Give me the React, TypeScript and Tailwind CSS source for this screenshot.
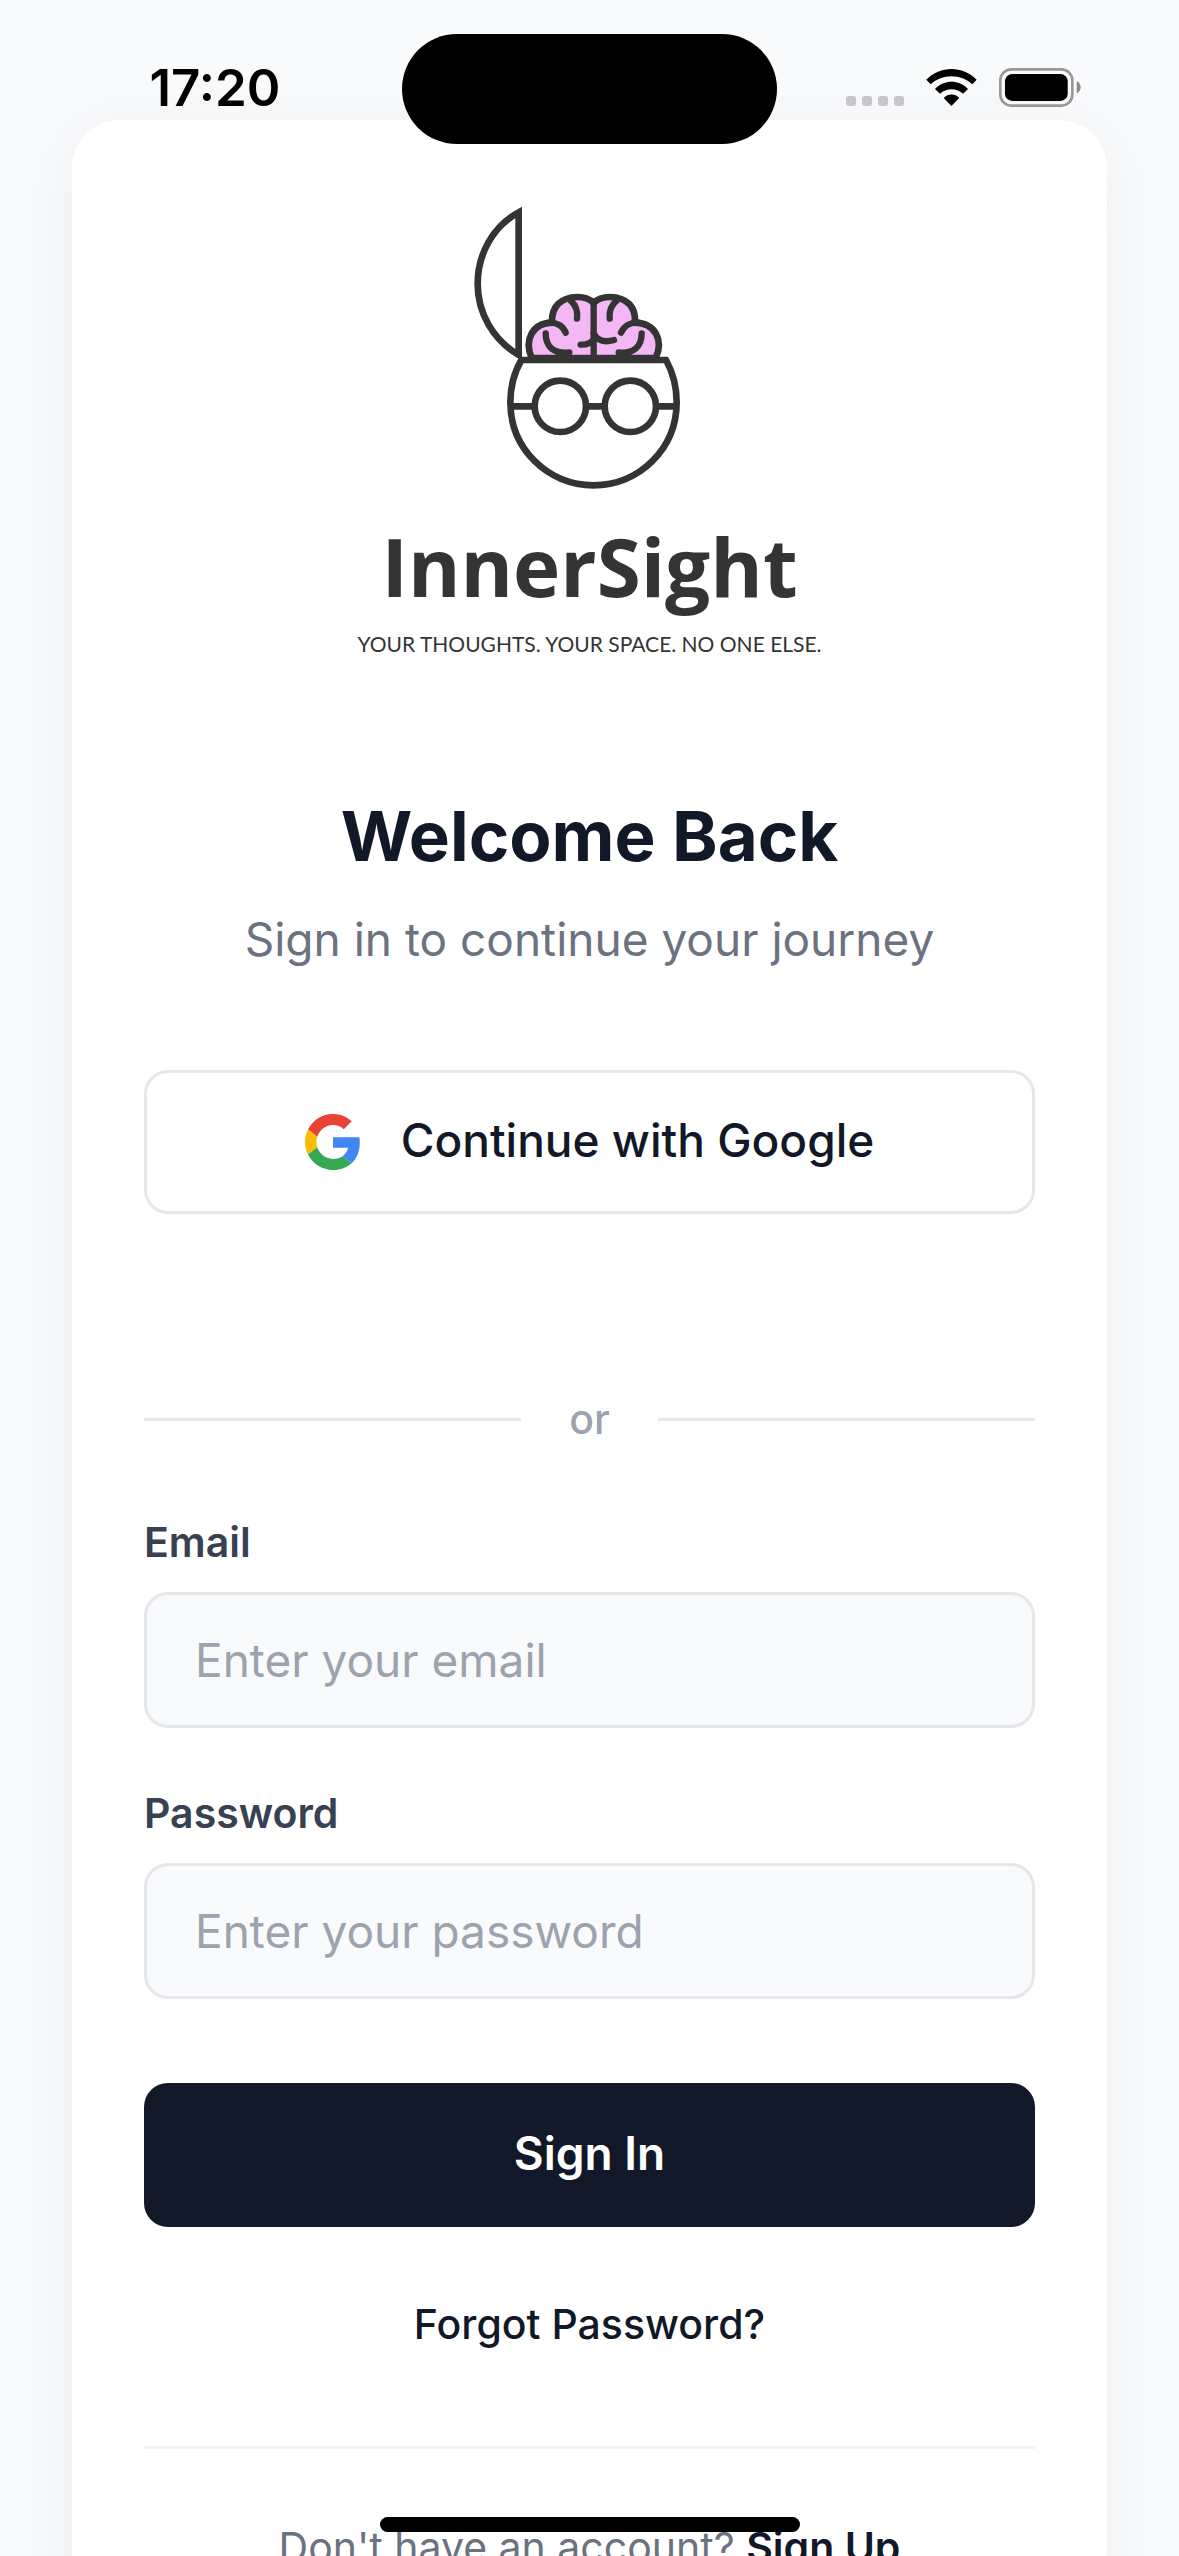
import React, { useState } from "react";

const STROKE = "#343434";

function Logo() {
  return (
    <svg viewBox="30 36 840 900" className="h-[300px] w-[280px]" fill="none" role="img" aria-label="InnerSight logo">
      {/* open skull cap */}
      <path d="M236 97 V525 C160 480 113 400 113 312 C113 220 160 138 236 97 Z" stroke={STROKE} strokeWidth="20" />
      {/* brain lobes */}
      <path
        d="M275 534 C252 480 276 430 336 428 C334 380 362 352 412 351 C434 351 450 357 461 369 C472 357 488 351 510 351 C560 352 588 380 585 428 C646 430 672 480 647 534 Z"
        fill="#f4b6f4"
        stroke={STROKE}
        strokeWidth="20"
        strokeLinejoin="round"
      />
      <g stroke={STROKE} strokeWidth="19" strokeLinecap="round" strokeLinejoin="round">
        <path d="M461 366 V536" />
        <path d="M326 428 C350 426 370 438 377 458" />
        <path d="M595 428 C571 426 552 438 543 458" />
        <path d="M392 362 C408 376 414 394 411 416" />
        <path d="M530 362 C512 376 507 394 509 416" />
        <path d="M317 460 C317 500 340 522 388 517" />
        <path d="M605 460 C605 500 582 522 536 517" />
        <path d="M357 520 V534" />
        <path d="M565 520 V534" />
        <path d="M422 494 C440 495 452 490 461 478" />
        <path d="M461 460 C472 482 494 488 522 480" />
      </g>
      {/* head and glasses */}
      <path
        d="M236 540 H678 C699 578 710 622 710 667 C710 806 598 916 461 916 C323 916 211 806 211 667 C211 622 221 580 244 540"
        stroke={STROKE}
        strokeWidth="20"
      />
      <g stroke={STROKE} strokeWidth="20">
        <circle cx="361" cy="679" r="77" />
        <circle cx="571" cy="679" r="77" />
        <path d="M214 679 H284 M438 679 H494 M648 679 H708" />
      </g>
    </svg>
  );
}

function GoogleIcon() {
  return (
    <svg viewBox="0 0 48 48" className="size-14 shrink-0" aria-hidden="true">
      <path fill="#EA4335" d="M24 9.5c3.54 0 6.71 1.22 9.21 3.6l6.85-6.85C35.9 2.38 30.47 0 24 0 14.62 0 6.51 5.38 2.56 13.22l7.98 6.19C12.43 13.72 17.74 9.5 24 9.5z" />
      <path fill="#4285F4" d="M46.98 24.55c0-1.57-.15-3.09-.38-4.55H24v9.02h12.94c-.58 2.96-2.26 5.48-4.78 7.18l7.73 6c4.51-4.18 7.09-10.36 7.09-17.65z" />
      <path fill="#FBBC05" d="M10.53 28.59c-.48-1.45-.76-2.99-.76-4.59s.27-3.14.76-4.59l-7.98-6.19C.92 16.46 0 20.12 0 24c0 3.88.92 7.54 2.56 10.78l7.97-6.19z" />
      <path fill="#34A853" d="M24 48c6.48 0 11.93-2.13 15.89-5.81l-7.73-6c-2.15 1.45-4.92 2.3-8.16 2.3-6.26 0-11.57-4.22-13.47-9.91l-7.98 6.19C6.51 42.62 14.62 48 24 48z" />
    </svg>
  );
}

function StatusBar() {
  return (
    <header className="pointer-events-none absolute inset-x-0 top-[34px] z-10 grid grid-cols-[1fr_375px_1fr] items-center">
      <time className="justify-self-center pb-1 pl-7 text-[51px] leading-none font-semibold text-black">17:20</time>
      <div className="h-[110px] rounded-full bg-black" />
      <div className="flex items-end gap-[22px] pb-[3px] pl-[69px]">
        <div className="flex gap-[6px] pb-px">
          <span className="size-[10px] rounded-[3px] bg-[#c6c6c8]" />
          <span className="size-[10px] rounded-[3px] bg-[#c6c6c8]" />
          <span className="size-[10px] rounded-[3px] bg-[#c6c6c8]" />
          <span className="size-[10px] rounded-[3px] bg-[#c6c6c8]" />
        </div>
        <svg viewBox="318 54 153 117" className="h-[39px] w-[51px]" aria-hidden="true">
          <path d="M319 89 C360 46 429 46 470 89 L457 103 C423 71 366 71 332 103 Z" />
          <path d="M345 117 C373 88 416 88 444 117 L429 131 C411 113 378 113 360 131 Z" />
          <path d="M371 144 C384 130 405 130 418 144 L394 168 Z" />
        </svg>
        <svg viewBox="537 54 247 117" className="h-[39px] w-[82px]" fill="none" aria-hidden="true">
          <rect x="541" y="58" width="217" height="109" rx="33" stroke="#98989a" strokeWidth="8" />
          <rect x="555" y="72" width="189" height="81" rx="22" fill="black" />
          <path d="M771 94 C787 100 787 124 771 130 Z" fill="#8a8a8c" />
        </svg>
      </div>
    </header>
  );
}

type FieldProps = {
  id: string;
  label: string;
  type: string;
  placeholder: string;
  value: string;
  onChange: (value: string) => void;
};

function Field({ id, label, type, placeholder, value, onChange }: FieldProps) {
  return (
    <div className="flex flex-col gap-[26px]">
      <label htmlFor={id} className="text-[41px] leading-[48px] font-semibold text-[#374151]">
        {label}
      </label>
      <input
        id={id}
        type={type}
        placeholder={placeholder}
        value={value}
        onChange={(e) => onChange(e.target.value)}
        className="h-[136px] w-full rounded-3xl border-3 border-[#e5e7eb] bg-[#f9fafb] px-12 text-[46px] text-[#111827] outline-none placeholder:text-[#9ca3af]"
      />
    </div>
  );
}

export default function App() {
  const [email, setEmail] = useState("");
  const [password, setPassword] = useState("");

  return (
    <div className="relative h-screen overflow-hidden bg-[#f9fafb] px-[72px] pt-[120px] font-['Inter',sans-serif]">
      <StatusBar />
      <main className="flex flex-col rounded-[48px] bg-white p-[72px] shadow-[0_12px_72px_rgba(0,0,0,0.05)]">
        <div className="flex flex-col items-center text-[#343434]">
          <Logo />
          <p className="mt-[26px] font-['Open_Sans',sans-serif] text-[80px] leading-[96px] font-bold">InnerSight</p>
          <p className="mt-[14px] font-['Lato',sans-serif] text-[21px] leading-8">YOUR THOUGHTS. YOUR SPACE. NO ONE ELSE.</p>
        </div>

        <div className="mt-[134px] text-center">
          <h1 className="text-[69px] leading-[84px] font-bold text-[#111827]">Welcome Back</h1>
          <p className="mt-[31px] text-[46px] leading-[60px] text-[#6b7280]">Sign in to continue your journey</p>
        </div>

        <button
          type="button"
          className="mt-[101px] flex h-36 items-center justify-center gap-10 rounded-3xl border-3 border-[#e5e7eb] bg-white text-[46px] font-medium text-[#111827]"
        >
          <GoogleIcon />
          <span className="pb-1">Continue with Google</span>
        </button>

        <div className="mt-[181px] flex items-center gap-12">
          <div className="h-[3px] flex-1 bg-[#e5e7eb]" />
          <span className="text-[41px] leading-[48px] font-medium text-[#9ca3af]">or</span>
          <div className="h-[3px] flex-1 bg-[#e5e7eb]" />
        </div>

        <form className="mt-[75px] flex flex-col" onSubmit={(e) => e.preventDefault()}>
          <div className="flex flex-col gap-[61px]">
            <Field id="email" label="Email" type="email" placeholder="Enter your email" value={email} onChange={setEmail} />
            <Field id="password" label="Password" type="password" placeholder="Enter your password" value={password} onChange={setPassword} />
          </div>
          <button type="submit" className="mt-[84px] h-36 rounded-3xl bg-[#111827] pb-1 text-[46px] font-semibold text-white">
            Sign In
          </button>
        </form>

        <a href="#forgot" className="mt-[73px] self-center text-[41px] leading-[48px] font-medium text-[#111827]">
          Forgot Password?
        </a>

        <div className="mt-[98px] border-t-3 border-[#f3f4f6] pt-[74px] text-center text-[41px] leading-[48px] text-[#6b7280]">
          Don't have an account?{" "}
          <a href="#signup" className="font-semibold text-[#111827]">
            Sign Up
          </a>
        </div>
      </main>
      <div className="absolute bottom-6 left-1/2 z-10 h-[15px] w-[420px] -translate-x-1/2 rounded-full bg-black" />
    </div>
  );
}
